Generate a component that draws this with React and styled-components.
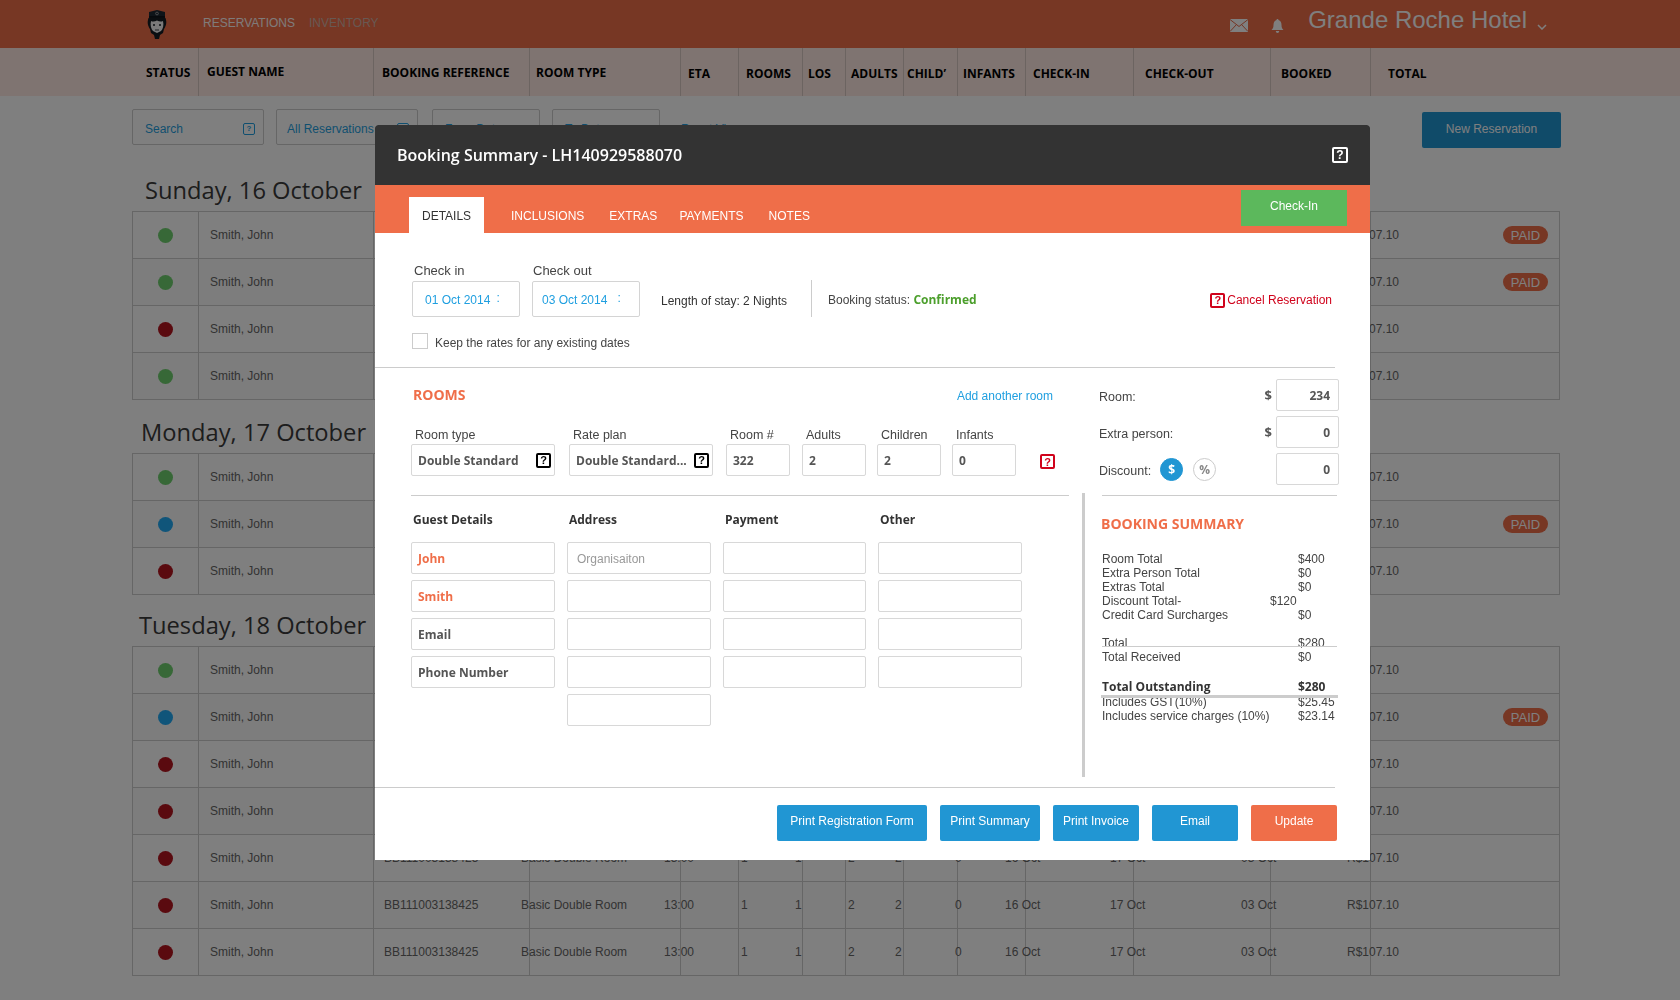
import React from "react"
import styled, { createGlobalStyle } from "styled-components"

const GlobalStyle = createGlobalStyle`
  html, body {
    margin: 0;
    padding: 0;
    background: #fff;
  }
  body {
    font-family: "Liberation Sans", Arial, sans-serif;
    font-size: 12px;
    color: #444;
    height: 1000px;
    overflow: hidden;
  }
  * {
    box-sizing: border-box;
  }
`

const GRID = "66px 175px 156px 151px 58px 64px 43px 58px 54px 68px 108px 137px 100px 190px"

const HEADS = [
  ["STATUS", 14, 0],
  ["GUEST NAME", 8, -1],
  ["BOOKING REFERENCE", 8, 0],
  ["ROOM TYPE", 6, 0],
  ["ETA", 7, 1],
  ["ROOMS", 7, 1],
  ["LOS", 5, 1],
  ["ADULTS", 5, 1],
  ["CHILD’", 3, 1],
  ["INFANTS", 5, 1],
  ["CHECK-IN", 7, 1],
  ["CHECK-OUT", 11, 1],
  ["BOOKED", 10, 1],
  ["TOTAL", 17, 1],
]

// data cells don't line up with the header columns in the design
const OFFSETS = [11, 10, -9, -17, 2, -8, 2, -9, -3, -21, -24, -30, -24]
const VALUES = [
  "Smith, John",
  "BB111003138425",
  "Basic Double Room",
  "13:00",
  "1",
  "1",
  "2",
  "2",
  "0",
  "16 Oct",
  "17 Oct",
  "03 Oct",
  "R$107.10",
]

const DAYS = [
  {
    title: "Sunday, 16 October",
    indent: 13,
    height: 66,
    rows: [
      ["green", true],
      ["green", true],
      ["red", false],
      ["green", false],
    ],
  },
  {
    title: "Monday, 17 October",
    indent: 9,
    height: 53,
    rows: [
      ["green", false],
      ["blue", true],
      ["red", false],
    ],
  },
  {
    title: "Tuesday, 18 October",
    indent: 7,
    height: 51,
    rows: [
      ["green", false],
      ["blue", true],
      ["red", false],
      ["red", false],
      ["red", false],
      ["red", false],
      ["red", false],
    ],
  },
]

const DOTS = { green: "#6fd06f", blue: "#20aaf5", red: "#b4141e" }

const TABS = [
  ["DETAILS", 0],
  ["INCLUSIONS", 15],
  ["EXTRAS", 1],
  ["PAYMENTS", -2],
  ["NOTES", 1],
]

const ROOM_FIELDS = [
  { label: "Room type", value: "Double Standard", width: 144, gap: 0, help: true },
  { label: "Rate plan", value: "Double Standard...", width: 144, gap: 14, help: true },
  { label: "Room #", value: "322", width: 64, gap: 13 },
  { label: "Adults", value: "2", width: 64, gap: 12 },
  { label: "Children", value: "2", width: 64, gap: 11 },
  { label: "Infants", value: "0", width: 64, gap: 11 },
]

const GUEST_COLUMNS = [
  {
    title: "Guest Details",
    fields: [
      { text: "John", tone: "accent" },
      { text: "Smith", tone: "accent" },
      { text: "Email" },
      { text: "Phone Number" },
    ],
  },
  {
    title: "Address",
    fields: [{ text: "Organisaiton", tone: "hint" }, {}, {}, {}, {}],
  },
  { title: "Payment", fields: [{}, {}, {}, {}] },
  { title: "Other", fields: [{}, {}, {}, {}] },
]

const App = () => {
  return (
    <>
      <GlobalStyle />
      <TopBar>
        <Logo />
        <TopLink>RESERVATIONS</TopLink>
        <TopLink $dim>INVENTORY</TopLink>
        <TopRight>
          <MailIcon />
          <BellIcon />
          <HotelName>Grande Roche Hotel</HotelName>
          <Chevron />
        </TopRight>
      </TopBar>
      <ColumnBar>
        {HEADS.map(([label, x, y]) => (
          <ColumnHead key={label} $x={x} $y={y}>
            {label}
          </ColumnHead>
        ))}
      </ColumnBar>

      <Main>
        <Toolbar>
          <FilterBox $w={132} $pad={12}>
            Search
            <Help $tone="link" $size={12} />
          </FilterBox>
          <FilterBox $w={142} $pad={10} $after={14}>
            All Reservations
            <Help $tone="link" $size={12} />
          </FilterBox>
          <FilterBox $w={108} $pad={12}>
            From Date
          </FilterBox>
          <FilterBox $w={108} $pad={12}>
            To Date
          </FilterBox>
          <ResetLink>Reset View</ResetLink>
          <NewButton>New Reservation</NewButton>
        </Toolbar>

        {DAYS.map((day) => (
          <section key={day.title}>
            <DayTitle $indent={day.indent} $height={day.height}>
              {day.title}
            </DayTitle>
            <Table>
              {day.rows.map(([dot, paid], i) => (
                <Row key={i} $even={i % 2 === 1}>
                  <DotCell>
                    <Dot $color={DOTS[dot]} />
                  </DotCell>
                  {VALUES.map((value, c) => (
                    <Cell key={c}>
                      <CellText $x={OFFSETS[c]}>{value}</CellText>
                      {c === VALUES.length - 1 && paid && <PaidBadge>PAID</PaidBadge>}
                    </Cell>
                  ))}
                </Row>
              ))}
            </Table>
          </section>
        ))}
      </Main>

      <Backdrop>
        <Modal>
          <ModalHeader>
            <ModalTitle>Booking Summary - LH140929588070</ModalTitle>
            <Help $tone="light" $size={16} />
          </ModalHeader>

          <TabBar>
            {TABS.map(([label, gap], i) => (
              <Tab key={label} $active={i === 0} $gap={gap}>
                {label}
              </Tab>
            ))}
            <CheckInButton>Check-In</CheckInButton>
          </TabBar>

          <StaySection>
            <StayRow>
              <DateField>
                <DateLabel $pad={2}>Check in</DateLabel>
                <DateBox $pad={12}>
                  01 Oct 2014<DateDots $gap={6}>:</DateDots>
                </DateBox>
              </DateField>
              <DateField>
                <DateLabel $pad={1}>Check out</DateLabel>
                <DateBox $pad={9}>
                  03 Oct 2014<DateDots $gap={10}>:</DateDots>
                </DateBox>
              </DateField>
              <StayLength>Length of stay: 2 Nights</StayLength>
              <StayStatus>
                Booking status: <StatusWord>Confirmed</StatusWord>
              </StayStatus>
              <CancelLink>
                <Help $tone="danger" $size={15} />
                Cancel Reservation
              </CancelLink>
            </StayRow>
            <KeepRow>
              <Checkbox />
              <KeepText>Keep the rates for any existing dates</KeepText>
            </KeepRow>
          </StaySection>
          <SectionLine />

          <UpperRow>
            <RoomsPane>
              <RoomsHead>
                <SectionTitle>ROOMS</SectionTitle>
                <AddLink>Add another room</AddLink>
              </RoomsHead>
              <RoomFields>
                {ROOM_FIELDS.map((f) => (
                  <RoomField key={f.label} $w={f.width} $gap={f.gap}>
                    <FieldLabel>{f.label}</FieldLabel>
                    <Field>
                      <FieldValue>{f.value}</FieldValue>
                      {f.help && <FieldHelp />}
                    </Field>
                  </RoomField>
                ))}
                <RemoveRoom>
                  <Help $tone="danger" $size={15} />
                </RemoveRoom>
              </RoomFields>
            </RoomsPane>
            <RatesPane>
              <RateRow>
                <RateLabel>Room:</RateLabel>
                <Currency>$</Currency>
                <RateField>234</RateField>
              </RateRow>
              <RateRow>
                <RateLabel>Extra person:</RateLabel>
                <Currency>$</Currency>
                <RateField>0</RateField>
              </RateRow>
              <RateRow>
                <RateLabel>Discount:</RateLabel>
                <ModeButton $active>$</ModeButton>
                <ModeButton>%</ModeButton>
                <RateField>0</RateField>
              </RateRow>
            </RatesPane>
          </UpperRow>

          <LowerRow>
            <GuestPane>
              {GUEST_COLUMNS.map((col) => (
                <GuestColumn key={col.title}>
                  <GuestTitle>{col.title}</GuestTitle>
                  {col.fields.map((f, i) => (
                    <GuestField key={i} $tone={f.tone}>
                      {f.text}
                    </GuestField>
                  ))}
                </GuestColumn>
              ))}
            </GuestPane>
            <PaneBar />
            <SummaryPane>
              <SummaryTitle>BOOKING SUMMARY</SummaryTitle>
              <SummaryRow>
                Room Total<span>$400</span>
              </SummaryRow>
              <SummaryRow>
                Extra Person Total<span>$0</span>
              </SummaryRow>
              <SummaryRow>
                Extras Total<span>$0</span>
              </SummaryRow>
              <SummaryRow>
                Discount Total-<Shifted>$120</Shifted>
              </SummaryRow>
              <SummaryRow>
                Credit Card Surcharges<span>$0</span>
              </SummaryRow>
              <SummaryRow $top={14}>
                Total<span>$280</span>
              </SummaryRow>
              <ThinRule />
              <SummaryRow>
                Total Received<span>$0</span>
              </SummaryRow>
              <OutstandingRow>
                Total Outstanding<span>$280</span>
              </OutstandingRow>
              <ThickRule />
              <SummaryRow>
                Includes GST(10%)<span>$25.45</span>
              </SummaryRow>
              <SummaryRow>
                Includes service charges (10%)<span>$23.14</span>
              </SummaryRow>
            </SummaryPane>
          </LowerRow>

          <FooterLine />
          <Footer>
            <FooterButton $w={150}>Print Registration Form</FooterButton>
            <FooterButton $w={100}>Print Summary</FooterButton>
            <FooterButton $w={86}>Print Invoice</FooterButton>
            <FooterButton $w={86}>Email</FooterButton>
            <FooterButton $w={86} $accent>
              Update
            </FooterButton>
          </Footer>
        </Modal>
      </Backdrop>
    </>
  )
}

export default App

const Logo = () => (
  <LogoSvg viewBox="0 0 22 30">
    <path d="M3 8V3l8-2 8 2v5z" fill="#1c2833" />
    <rect x="3" y="7" width="16" height="2.500" fill="#0e151b" />
    <circle cx="11" cy="4.500" r="1.400" fill="none" stroke="#bbb" strokeWidth="0.7" />
    <path d="M2 11c0-2 1-2.500 2-2.500h14c1 0 2 .5 2 2.500 1 3-.5 7-2 9l-1 4-3 2-1 4h-4l-1-4-3-2-1-4c-1.500-2-3-6-2-9z" fill="#141c22" />
    <path d="M5 12c2 1 4 .5 6-.5 2 1 4 1.500 6 .5 1 4 0 8-2 10l-4 2-4-2c-2-2-3-6-2-10z" fill="#f4f4f4" />
    <circle cx="8" cy="16" r="1" fill="#141c22" />
    <circle cx="14" cy="16" r="1" fill="#141c22" />
    <path d="M9 21h4" stroke="#141c22" strokeWidth="0.8" />
  </LogoSvg>
)

const MailIcon = () => (
  <svg width="18" height="13" viewBox="0 0 18 13">
    <rect width="18" height="13" fill="#fff" />
    <path d="M0 .5l9 7 9-7M0 12.500l6.500-7M18 12.500l-6.500-7" fill="none" stroke="#ea6a48" strokeWidth="1" />
  </svg>
)

const BellIcon = () => (
  <BellSvg viewBox="0 0 12 14">
    <path d="M6 0c.7 0 1 .5 1 1.100C9 1.600 10 3.500 10 6c0 2.500.7 3.500 2 5H0c1.300-1.500 2-2.500 2-5 0-2.500 1-4.400 3-4.900C5 .5 5.300 0 6 0z" fill="#fff" />
    <path d="M4.300 12h3.400c0 1.100-.8 2-1.700 2s-1.700-.9-1.700-2z" fill="#fff" />
  </BellSvg>
)

const Chevron = () => (
  <ChevronSvg viewBox="0 0 10 6">
    <path d="M1 1l4 4 4-4" fill="none" stroke="#fff" strokeWidth="1.500" />
  </ChevronSvg>
)

const TopBar = styled.header`
  height: 48px;
  background: #ef6e49;
  display: flex;
  align-items: center;
  padding-left: 146px;
`
const LogoSvg = styled.svg`
  width: 22px;
  height: 30px;
  margin-right: 35px;
  margin-top: -1px;
`
const TopLink = styled.a`
  color: ${(p) => (p.$dim ? "#c9c1bc" : "#fff")};
  opacity: ${(p) => (p.$dim ? 0.8 : 0.95)};
  font-size: 12px;
  margin-right: 14px;
  margin-top: -3px;
`
const TopRight = styled.div`
  margin-left: auto;
  padding-right: 133px;
  display: flex;
  align-items: center;
  margin-top: 3px;
`
const BellSvg = styled.svg`
  width: 13px;
  height: 14px;
  margin-left: 23px;
`
const HotelName = styled.span`
  color: #fff;
  font-size: 24px;
  line-height: 28px;
  margin-left: 24px;
  margin-top: -11px;
`
const ChevronSvg = styled.svg`
  width: 10px;
  height: 6px;
  margin-left: 10px;
  margin-top: 3px;
`
const ColumnBar = styled.div`
  height: 48px;
  background: #ffe9e2;
  display: grid;
  grid-template-columns: ${GRID};
  padding-left: 132px;
`
const ColumnHead = styled.div`
  font-family: "Open Sans", sans-serif;
  font-weight: 700;
  font-size: 12px;
  color: #000;
  display: flex;
  align-items: center;
  padding-left: ${(p) => p.$x}px;
  padding-top: ${(p) => 2 * Math.max(p.$y, 0)}px;
  padding-bottom: ${(p) => 2 * Math.max(-p.$y, 0)}px;
  border-left: 1px solid #d8c8c2;

  &:first-child {
    border-left: none;
  }
`
const Main = styled.main`
  padding: 13px 120px 0 132px;
`
const Toolbar = styled.div`
  display: flex;
  align-items: flex-start;
  height: 36px;
`
const FilterBox = styled.div`
  width: ${(p) => p.$w}px;
  height: 36px;
  margin-right: ${(p) => p.$after || 12}px;
  padding: 3px 8px 0 ${(p) => p.$pad}px;
  border: 1px solid #ccc;
  border-radius: 2px;
  display: flex;
  align-items: center;
  justify-content: space-between;
  color: #1f9fe0;
  font-size: 12px;
`
const ResetLink = styled.a`
  color: #1f9fe0;
  font-size: 12px;
  margin: 13px 0 0 9px;
`
const NewButton = styled.button`
  margin: 3px -1px 0 auto;
  width: 139px;
  height: 36px;
  border: none;
  border-radius: 2px;
  background: #2196d3;
  color: #fff;
  font: 12px "Liberation Sans", Arial, sans-serif;
  padding-bottom: 4px;
`
const DayTitle = styled.h2`
  margin: 0;
  height: ${(p) => p.$height}px;
  padding-left: ${(p) => p.$indent}px;
  padding-bottom: 1px;
  display: flex;
  align-items: flex-end;
  font-family: "Open Sans", sans-serif;
  font-weight: 400;
  font-size: 23.7px;
  line-height: 40px;
  color: #3a3a3a;
`
const Table = styled.div`
  border-bottom: 1px solid #ccc;
`
const Row = styled.div`
  display: grid;
  grid-template-columns: ${GRID};
  height: 47px;
  border-top: 1px solid #ccc;
  background: ${(p) => (p.$even ? "#fafafa" : "#fff")};
`
const Cell = styled.div`
  display: flex;
  align-items: center;
  border-left: 1px solid #ccc;
  color: #666;
  font-size: 12px;
  white-space: nowrap;

  &:last-child {
    border-right: 1px solid #ccc;
  }
`
const DotCell = styled.div`
  display: flex;
  align-items: center;
  justify-content: center;
  border-left: 1px solid #ccc;
`
const Dot = styled.span`
  width: 15px;
  height: 15px;
  border-radius: 50%;
  background: ${(p) => p.$color};
`
const CellText = styled.span`
  margin-left: ${(p) => p.$x}px;
`
const PaidBadge = styled.span`
  margin-left: auto;
  margin-right: 11px;
  width: 45px;
  height: 18px;
  line-height: 19px;
  border-radius: 9px;
  text-align: center;
  font-size: 13px;
  color: #fff;
  background: #ef6e49;
`

/* modal */
const Backdrop = styled.div`
  position: fixed;
  inset: 0;
  background: rgba(0, 0, 0, 0.5);
  padding: 125px 0 0 375px;
`
const Modal = styled.div`
  width: 995px;
  height: 735px;
  background: #fff;
  border-radius: 3px 3px 0 0;
  overflow: hidden;
`
const ModalHeader = styled.div`
  height: 60px;
  background: #333;
  display: flex;
  align-items: center;
  justify-content: space-between;
  padding: 0 22px;
`
const ModalTitle = styled.div`
  color: #fff;
  font-family: "Open Sans", sans-serif;
  font-weight: 600;
  font-size: 16px;
`
const Help = styled.span.attrs({ children: "?" })`
  flex: none;
  display: inline-flex;
  align-items: center;
  justify-content: center;
  width: ${(p) => p.$size}px;
  height: ${(p) => p.$size}px;
  font: 700 ${(p) => p.$size - 4}px "Liberation Sans", Arial, sans-serif;
  border: ${(p) => (p.$size > 12 ? 2 : 1)}px solid;
  border-radius: 2px;
  color: ${(p) =>
    p.$tone === "light"
      ? "#fff"
      : p.$tone === "danger"
        ? "#d0021b"
        : p.$tone === "link"
          ? "#1f9fe0"
          : "#000"};
`
const TabBar = styled.nav`
  height: 48px;
  background: #ef6e49;
  display: flex;
  align-items: flex-end;
  padding-left: 34px;
`
const Tab = styled.a`
  height: 36px;
  line-height: 38px;
  padding: 0 12px;
  margin-left: ${(p) => p.$gap}px;
  font-size: 12px;
  color: ${(p) => (p.$active ? "#333" : "#fff")};
  background: ${(p) => (p.$active ? "#fff" : "transparent")};
  ${(p) => p.$active && "padding: 0 13px; width: 75px;"}
`
const CheckInButton = styled.button`
  align-self: flex-start;
  margin: 5px 23px 0 auto;
  width: 106px;
  height: 36px;
  border: none;
  background: #5cb85c;
  color: #fff;
  font: 12px "Liberation Sans", Arial, sans-serif;
  padding-bottom: 5px;
`
const StaySection = styled.div`
  padding: 30px 38px 18px 37px;
`
const StayRow = styled.div`
  display: flex;
  align-items: flex-end;
`
const DateField = styled.div`
  width: 108px;
  margin-right: 12px;
`
const DateLabel = styled.div`
  height: 18px;
  line-height: 16px;
  padding-left: ${(p) => p.$pad}px;
  font-size: 13px;
  color: #444;
`
const DateBox = styled.div`
  height: 36px;
  border: 1px solid #d4d4d4;
  border-radius: 2px;
  color: #1f9fe0;
  display: flex;
  align-items: center;
  padding: 2px 0 0 ${(p) => p.$pad}px;
`
const DateDots = styled.span`
  margin-left: ${(p) => p.$gap}px;
  margin-top: -5px;
`
const StayLength = styled.div`
  height: 36px;
  line-height: 41px;
  margin-left: 9px;
  color: #333;
  width: 150px;
`
const StayStatus = styled.div`
  height: 37px;
  line-height: 39px;
  border-left: 1px solid #ccc;
  padding-left: 16px;
  color: #444;
`
const StatusWord = styled.b`
  font-family: "Open Sans", sans-serif;
  color: #4c9f2c;
`
const CancelLink = styled.a`
  margin-left: auto;
  height: 36px;
  display: flex;
  align-items: center;
  gap: 2px;
  padding-top: 2px;
  color: #d0021b;
  font-size: 12px;
`
const KeepRow = styled.label`
  display: flex;
  align-items: center;
  gap: 7px;
  margin-top: 16px;
  height: 16px;
  color: #444;
`
const KeepText = styled.span`
  padding-top: 3px;
`
const Checkbox = styled.span`
  width: 16px;
  height: 16px;
  border: 1px solid #ccc;
`
const SectionLine = styled.div`
  width: 960px;
  height: 1px;
  background: #ccc;
`
const UpperRow = styled.div`
  display: flex;
  height: 127px;
`
const RoomsPane = styled.div`
  width: 694px;
  padding: 17px 0 0 36px;
`
const RoomsHead = styled.div`
  display: flex;
  align-items: center;
  justify-content: space-between;
  height: 20px;
  padding-right: 16px;
`
const SectionTitle = styled.h3`
  margin: -2px 0 0 2px;
  font-family: "Open Sans", sans-serif;
  font-weight: 700;
  font-size: 14px;
  color: #ef6e49;
`
const AddLink = styled.a`
  color: #1f9fe0;
  font-size: 12px;
  padding-top: 2px;
`
const RoomFields = styled.div`
  display: flex;
  margin-top: 22px;
`
const RoomField = styled.div`
  width: ${(p) => p.$w}px;
  margin-left: ${(p) => p.$gap}px;
`
const FieldLabel = styled.div`
  height: 17px;
  line-height: 16px;
  padding-left: 4px;
  font-size: 12.5px;
  color: #444;
`
const Field = styled.div`
  height: 32px;
  border: 1px solid #d8d8d8;
  border-radius: 2px;
  display: flex;
  align-items: center;
  justify-content: space-between;
  padding: 0 3px 0 6px;
  font-family: "Open Sans", sans-serif;
  font-weight: 700;
  font-size: 12px;
  color: #555;
  white-space: nowrap;
`
const FieldValue = styled.span`
  padding-top: 1px;
`
const FieldHelp = styled(Help).attrs({ $size: 15 })``
const RemoveRoom = styled.div`
  margin: 27px 0 0 24px;
`
const RatesPane = styled.div`
  width: 240px;
  margin-left: 30px;
  padding-top: 11px;
  display: flex;
  flex-direction: column;
  gap: 5px;
`
const RateRow = styled.div`
  display: flex;
  align-items: center;
  height: 32px;
`
const RateLabel = styled.span`
  padding-top: 3px;
  font-size: 12.5px;
  color: #444;
  margin-right: 9px;
`
const Currency = styled.span`
  margin-left: auto;
  font-family: "Open Sans", sans-serif;
  font-weight: 700;
  font-size: 13px;
  color: #555;
`
const RateField = styled(Field)`
  margin-left: auto;
  width: 63px;
  justify-content: flex-end;
  padding: 0 8px 0 0;

  ${Currency} + & {
    margin-left: 4px;
  }
`
const ModeButton = styled.span`
  width: 23px;
  height: 23px;
  margin-right: 10px;
  border-radius: 50%;
  display: flex;
  align-items: center;
  justify-content: center;
  font-family: "Open Sans", sans-serif;
  font-weight: 700;
  font-size: 12px;
  border: 1px solid ${(p) => (p.$active ? "#2196d3" : "#ccc")};
  background: ${(p) => (p.$active ? "#2196d3" : "#fff")};
  color: ${(p) => (p.$active ? "#fff" : "#888")};
`
const LowerRow = styled.div`
  display: flex;
  height: 282px;
`
const GuestPane = styled.div`
  width: 658px;
  margin-left: 36px;
  padding-top: 14px;
  border-top: 1px solid #ccc;
  display: grid;
  grid-template-columns: 144px 144px 143px 144px;
  column-gap: 12px;
  align-content: start;
`
const GuestColumn = styled.div`
  display: flex;
  flex-direction: column;
  gap: 6px;
`
const GuestTitle = styled.div`
  height: 20px;
  line-height: 20px;
  margin-bottom: 6px;
  padding-left: 2px;
  font-family: "Open Sans", sans-serif;
  font-weight: 700;
  font-size: 12px;
  color: #333;
`
const GuestField = styled.div`
  height: 32px;
  line-height: 32px;
  border: 1px solid #d8d8d8;
  border-radius: 2px;
  padding-left: ${(p) => (p.$tone === "hint" ? 9 : 6)}px;
  font-family: ${(p) => (p.$tone === "hint" ? '"Liberation Sans", Arial' : '"Open Sans"')}, sans-serif;
  font-weight: ${(p) => (p.$tone === "hint" ? 400 : 700)};
  font-size: 12px;
  color: ${(p) => (p.$tone === "accent" ? "#ef6e49" : p.$tone === "hint" ? "#999" : "#555")};
`
const PaneBar = styled.div`
  width: 3px;
  margin: -2px 0 0 13px;
  background: #ccc;
`
const SummaryPane = styled.div`
  width: 235px;
  margin-left: 17px;
  padding-top: 18px;
  border-top: 1px solid #ccc;
`
const SummaryTitle = styled.h3`
  margin: 0 0 18px -1px;
  height: 20px;
  line-height: 20px;
  font-family: "Open Sans", sans-serif;
  font-weight: 700;
  font-size: 14px;
  color: #ef6e49;
`
const SummaryRow = styled.div`
  display: grid;
  grid-template-columns: 196px 1fr;
  height: 14px;
  line-height: 14px;
  margin-top: ${(p) => p.$top || 0}px;
  font-size: 12px;
  color: #444;
  white-space: nowrap;
`
const Shifted = styled.span`
  margin-left: -28px;
`
const OutstandingRow = styled(SummaryRow)`
  margin-top: 16px;
  font-family: "Open Sans", sans-serif;
  font-weight: 700;
  color: #333;
`
const ThinRule = styled.div`
  position: relative;
  height: 1px;
  margin: -4px 0 3px;
  background: #ccc;
`
const ThickRule = styled.div`
  position: relative;
  height: 3px;
  margin: 1px 0 -3px -1px;
  width: 237px;
  background: #ccc;
`
const FooterLine = styled.div`
  width: 960px;
  height: 1px;
  margin-top: 10px;
  background: #ccc;
`
const Footer = styled.div`
  display: flex;
  justify-content: flex-end;
  gap: 13px;
  margin-top: 17px;
  padding-right: 33px;
`
const FooterButton = styled.button`
  width: ${(p) => p.$w}px;
  height: 36px;
  border: none;
  border-radius: 2px;
  background: ${(p) => (p.$accent ? "#ef6e49" : "#2196d3")};
  color: #fff;
  font: 12px "Liberation Sans", Arial, sans-serif;
  padding: 0 0 4px;
`
